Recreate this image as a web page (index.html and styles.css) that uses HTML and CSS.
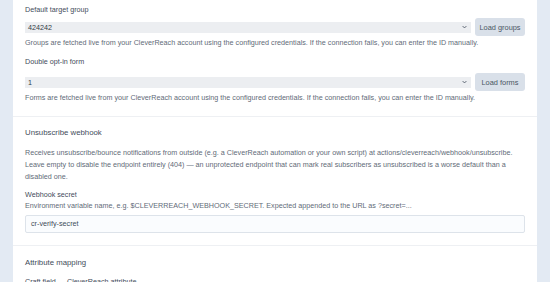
FILE: index.html
```html
<!DOCTYPE html>
<html>
<head>
<meta charset="utf-8">
<link rel="stylesheet" href="styles.css">
</head>
<body>
<div class="panel">
  <section class="sec sec-first">
    <div class="field">
      <div class="label">Default target group</div>
      <div class="row">
        <div class="select"><span>424242</span><svg class="chev" viewBox="0 0 8 5" width="5" height="4"><path d="M1 1l3 3 3-3" fill="none" stroke="#4a5563" stroke-width="1.4"/></svg></div>
        <button class="btn">Load groups</button>
      </div>
      <div class="help">Groups are fetched live from your CleverReach account using the configured credentials. If the connection fails, you can enter the ID manually.</div>
    </div>
    <div class="field field-2">
      <div class="label">Double opt-in form</div>
      <div class="row">
        <div class="select"><span>1</span><svg class="chev" viewBox="0 0 8 5" width="5" height="4"><path d="M1 1l3 3 3-3" fill="none" stroke="#4a5563" stroke-width="1.4"/></svg></div>
        <button class="btn">Load forms</button>
      </div>
      <div class="help">Forms are fetched live from your CleverReach account using the configured credentials. If the connection fails, you can enter the ID manually.</div>
    </div>
  </section>
  <section class="sec sec-webhook">
    <h2 class="heading">Unsubscribe webhook</h2>
    <p class="desc">Receives unsubscribe/bounce notifications from outside (e.g. a CleverReach automation or your own script) at actions/cleverreach/webhook/unsubscribe. Leave empty to disable the endpoint entirely (404) — an unprotected endpoint that can mark real subscribers as unsubscribed is a worse default than a disabled one.</p>
    <div class="label label-secret">Webhook secret</div>
    <div class="help help-tight">Environment variable name, e.g. $CLEVERREACH_WEBHOOK_SECRET. Expected appended to the URL as ?secret=...</div>
    <div class="input">cr-verify-secret</div>
  </section>
  <section class="sec sec-attr">
    <h2 class="heading">Attribute mapping</h2>
    <div class="label label-sub">Craft field → CleverReach attribute</div>
  </section>
</div>
</body>
</html>
```

FILE: styles.css
```css
html, body {
  margin: 0;
  padding: 0;
}
body {
  background: #e3eaf3;
  padding: 0 13px;
  height: 282px;
  overflow: hidden;
  font-family: "Liberation Sans", Arial, sans-serif;
  color: #3f4c5a;
}
.panel {
  background: #fff;
  min-height: 282px;
}
.sec {
  padding: 0 12px;
  border-top: 1px solid #eef0f3;
}
.sec-first {
  border-top: none;
  padding-top: 5px;
  padding-bottom: 13px;
}
.label {
  font-size: 7.2px;
  line-height: 10px;
  color: #3f4c5a;
}
.row {
  display: flex;
  align-items: center;
  gap: 4px;
  height: 18px;
  margin-top: 3px;
}
.field-2 {
  margin-top: 9px;
}
.field-2 .row {
  margin-top: 6px;
}
.select {
  flex: 1;
  height: 11px;
  background: #eceef1;
  display: flex;
  align-items: center;
  justify-content: space-between;
  padding: 0 4px 0 3px;
  font-size: 7.2px;
  color: #333c46;
}
.chev {
  display: block;
}
.btn {
  width: 50px;
  height: 18px;
  border: none;
  border-radius: 3px;
  background: #d9e0e9;
  color: #4a5663;
  font-family: inherit;
  font-size: 7.4px;
  padding: 0;
}
.help {
  font-size: 7.2px;
  line-height: 10px;
  margin-top: 2px;
  color: #5f6b78;
}
.sec-webhook {
  padding-top: 10px;
  padding-bottom: 12px;
}
.heading {
  margin: 0;
  font-weight: normal;
  font-size: 7.8px;
  line-height: 12px;
  color: #3f4c5a;
}
.desc {
  margin: 8px 0 0;
  font-size: 7.2px;
  line-height: 12px;
  color: #5f6b78;
}
.label-secret {
  margin-top: 7px;
}
.help-tight {
  margin-top: 1px;
}
.input {
  margin-top: 4px;
  height: 16px;
  border: 1px solid #dde3ea;
  border-radius: 2px;
  background: #fafcfe;
  font-size: 7.2px;
  line-height: 16px;
  padding: 0 5px;
  color: #3f4c5a;
}
.sec-attr {
  padding-top: 11px;
}
.label-sub {
  margin-top: 8px;
}
```
